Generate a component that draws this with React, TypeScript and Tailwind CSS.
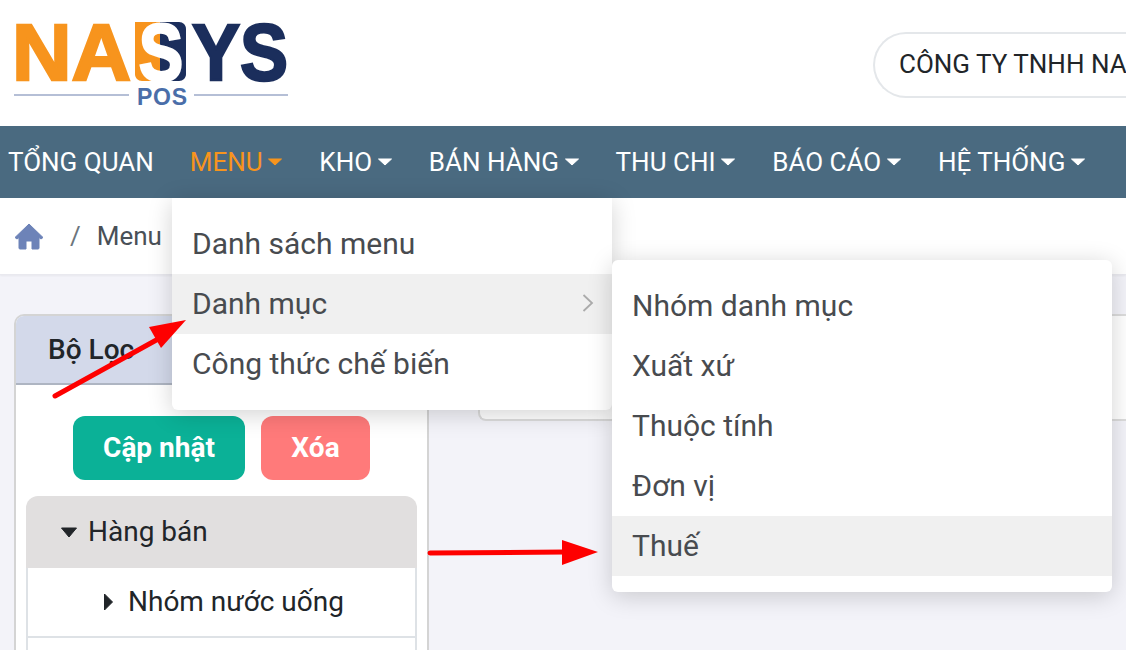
const font = "font-['Roboto',sans-serif]";

function Caret({ className = "" }: { className?: string }) {
  return (
    <svg width="16" height="8" viewBox="0 0 16 8" className={className}>
      <path d="M1.5 1h13L8 7z" fill="currentColor" stroke="currentColor" strokeLinejoin="round" />
    </svg>
  );
}

function Logo() {
  return (
    <svg width="300" height="110" viewBox="0 0 300 110" className="block">
      <g fontFamily="'Liberation Sans',sans-serif" fontWeight="700" fontSize="80">
        <text x="12" y="80" fill="#f7941d" textLength="119" lengthAdjust="spacingAndGlyphs" stroke="#f7941d" strokeWidth="2.5">NA</text>
        <path d="M135 22h25v59h-18c-4 0-7-3-7-7z" fill="#f7941d" />
        <path d="M160 22h19c4 0 7 3 7 7v45c0 4-3 7-7 7h-19z" fill="#1b2e5c" />
        <text x="139" y="80" fill="#fff" textLength="44" lengthAdjust="spacingAndGlyphs" stroke="#fff" strokeWidth="3">S</text>
        <text x="192" y="80" fill="#1b2e5c" textLength="96" lengthAdjust="spacingAndGlyphs" stroke="#1b2e5c" strokeWidth="2.5">YS</text>
      </g>
      <rect x="14" y="94" width="115" height="2" fill="#b5bfd6" />
      <rect x="194" y="94" width="94" height="2" fill="#b5bfd6" />
      <text x="162" y="105" textAnchor="middle" textLength="50" fontFamily="'Liberation Sans',sans-serif" fontWeight="700" fontSize="23" fill="#4a6ea9">POS</text>
    </svg>
  );
}

function NavItem({ label, active, caret = true }: { label: string; active?: boolean; caret?: boolean }) {
  return (
    <div className={`flex items-center gap-[4.7px] ${active ? "text-[#f7941d]" : "text-white"}`}>
      <span>{label}</span>
      {caret && <Caret />}
    </div>
  );
}

function Arrows() {
  return (
    <svg width="1126" height="650" viewBox="0 0 1126 650" className="absolute left-0 top-0 pointer-events-none">
      <path d="M55 396L160 338" stroke="#fe0000" strokeWidth="5" strokeLinecap="round" />
      <path d="M186 320L149 327L161 348z" fill="#fe0000" />
      <path d="M430 553L565 552" stroke="#fe0000" strokeWidth="5" strokeLinecap="round" />
      <path d="M598 552L562 540V565z" fill="#fe0000" />
    </svg>
  );
}

export default function App() {
  return (
    <div className={`relative w-[1126px] h-[650px] overflow-hidden bg-[#f3f3f9] ${font}`}>
      <header className="h-[126px] bg-white flex items-start justify-between overflow-hidden">
        <Logo />
        <div className="mt-[32px] ml-[-15px] w-[300px] h-[66px] pb-[2px] shrink-0 flex items-center pl-[24px] rounded-l-[33px] border-2 border-[#e4e7ea] border-r-0 text-[26px] text-[#212529] whitespace-nowrap mr-[-47px]">
          CÔNG TY TNHH NA
        </div>
      </header>

      <nav className="h-[72px] bg-[#4a6a80] flex items-center gap-[36px] pl-[8px] text-[26px] whitespace-nowrap">
        <NavItem label="TỔNG QUAN" caret={false} />
        <NavItem label="MENU" active />
        <NavItem label="KHO" />
        <NavItem label="BÁN HÀNG" />
        <NavItem label="THU CHI" />
        <NavItem label="BÁO CÁO" />
        <NavItem label="HỆ THỐNG" />
      </nav>

      <div className="h-[77px] pt-[1px] bg-white border-b border-[#e9e9ef] shadow-[0_1px_2px_rgba(0,0,0,0.05)] flex items-center pl-[14px] text-[26px] text-[#495057]">
        <svg width="30" height="27" viewBox="0 0 30 27" className="mr-[26px]">
          <path d="M15 1L29 14.5 27 16 25 14.5V25a1 1 0 0 1-1 1h-6v-8h-6v8H6a1 1 0 0 1-1-1V14.5L3 16 1 14.5z" fill="#6d83b8" stroke="#6d83b8" strokeLinejoin="round" />
        </svg>
        <span className="text-[#6c757d] mr-[16px]">/</span>
        <span>Menu</span>
      </div>

      <main className="flex items-start pl-[14px] pt-[39px] gap-[49px]">
        <section className="w-[415px] h-[400px] shrink-0 bg-white border-2 border-[#d4d4d4] rounded-t-[10px] border-b-0">
          <div className="h-[69px] bg-[#d3d9ea] border-b-2 border-[#aeb5c2] rounded-t-[8px] flex items-center pl-[32px] text-[28px] font-medium text-[#212529]">
            Bộ Lọc
          </div>
          <div className="flex justify-center gap-[16px] mt-[31px]">
            <div className="w-[172px] h-[64px] rounded-[12px] bg-[#0bb197] flex items-center justify-center text-white text-[28px] font-bold">
              Cập nhật
            </div>
            <div className="w-[109px] h-[64px] rounded-[12px] bg-[#ff7a7a] flex items-center justify-center text-white text-[28px] font-bold">
              Xóa
            </div>
          </div>
          <div className="mx-[10px] mt-[16px]">
            <div className="h-[72px] bg-[#e1dfdf] rounded-t-[12px] flex items-center pl-[34px] gap-[10px] text-[28px] text-[#212529]">
              <svg width="18" height="11" viewBox="0 0 18 11"><path d="M1.5 1h15L9 10z" fill="currentColor" stroke="currentColor" strokeLinejoin="round" /></svg>
              Hàng bán
            </div>
            <div className="h-[70px] bg-white border-x-2 border-b-2 border-[#dee2e6] flex items-center pl-[75px] gap-[14px] text-[28px] text-[#212529]">
              <svg width="11" height="20" viewBox="0 0 11 20"><path d="M1.5 2v16L9.5 10z" fill="currentColor" stroke="currentColor" strokeLinejoin="round" /></svg>
              Nhóm nước uống
            </div>
            <div className="h-[40px] border-x-2 border-[#dee2e6]" />
          </div>
        </section>
        <section className="flex-1 h-[107px] bg-white border-2 border-[#dcdcdc] border-r-0 rounded-bl-[8px]" />
      </main>

      <div className="absolute left-[172px] top-[198px] w-[440px] h-[212px] pt-[16px] bg-white rounded-b-[6px] shadow-[0_4px_24px_rgba(0,0,0,0.18)] text-[30px] text-[#484b4f]">
        <div className="h-[60px] pb-[2px] flex items-center pl-[20px]">Danh sách menu</div>
        <div className="h-[60px] pb-[2px] flex items-center justify-between pl-[20px] pr-[17px] bg-[#f0f0f0]">
          Danh mục
          <svg width="14" height="20" viewBox="0 0 14 20"><path d="M2.5 2L11 10 2.5 18" fill="none" stroke="#ababab" strokeWidth="1.8" /></svg>
        </div>
        <div className="h-[60px] pb-[2px] flex items-center pl-[20px]">Công thức chế biến</div>
      </div>

      <div className="absolute left-[612px] top-[260px] w-[500px] h-[332px] pt-[16px] bg-white rounded-[6px] shadow-[0_4px_24px_rgba(0,0,0,0.18)] text-[30px] text-[#484b4f]">
        <div className="h-[60px] pb-[2px] flex items-center pl-[20px]">Nhóm danh mục</div>
        <div className="h-[60px] pb-[2px] flex items-center pl-[20px]">Xuất xứ</div>
        <div className="h-[60px] pb-[2px] flex items-center pl-[20px]">Thuộc tính</div>
        <div className="h-[60px] pb-[2px] flex items-center pl-[20px]">Đơn vị</div>
        <div className="h-[60px] pb-[2px] flex items-center pl-[20px] bg-[#f0f0f0]">Thuế</div>
      </div>

      <Arrows />
    </div>
  );
}
